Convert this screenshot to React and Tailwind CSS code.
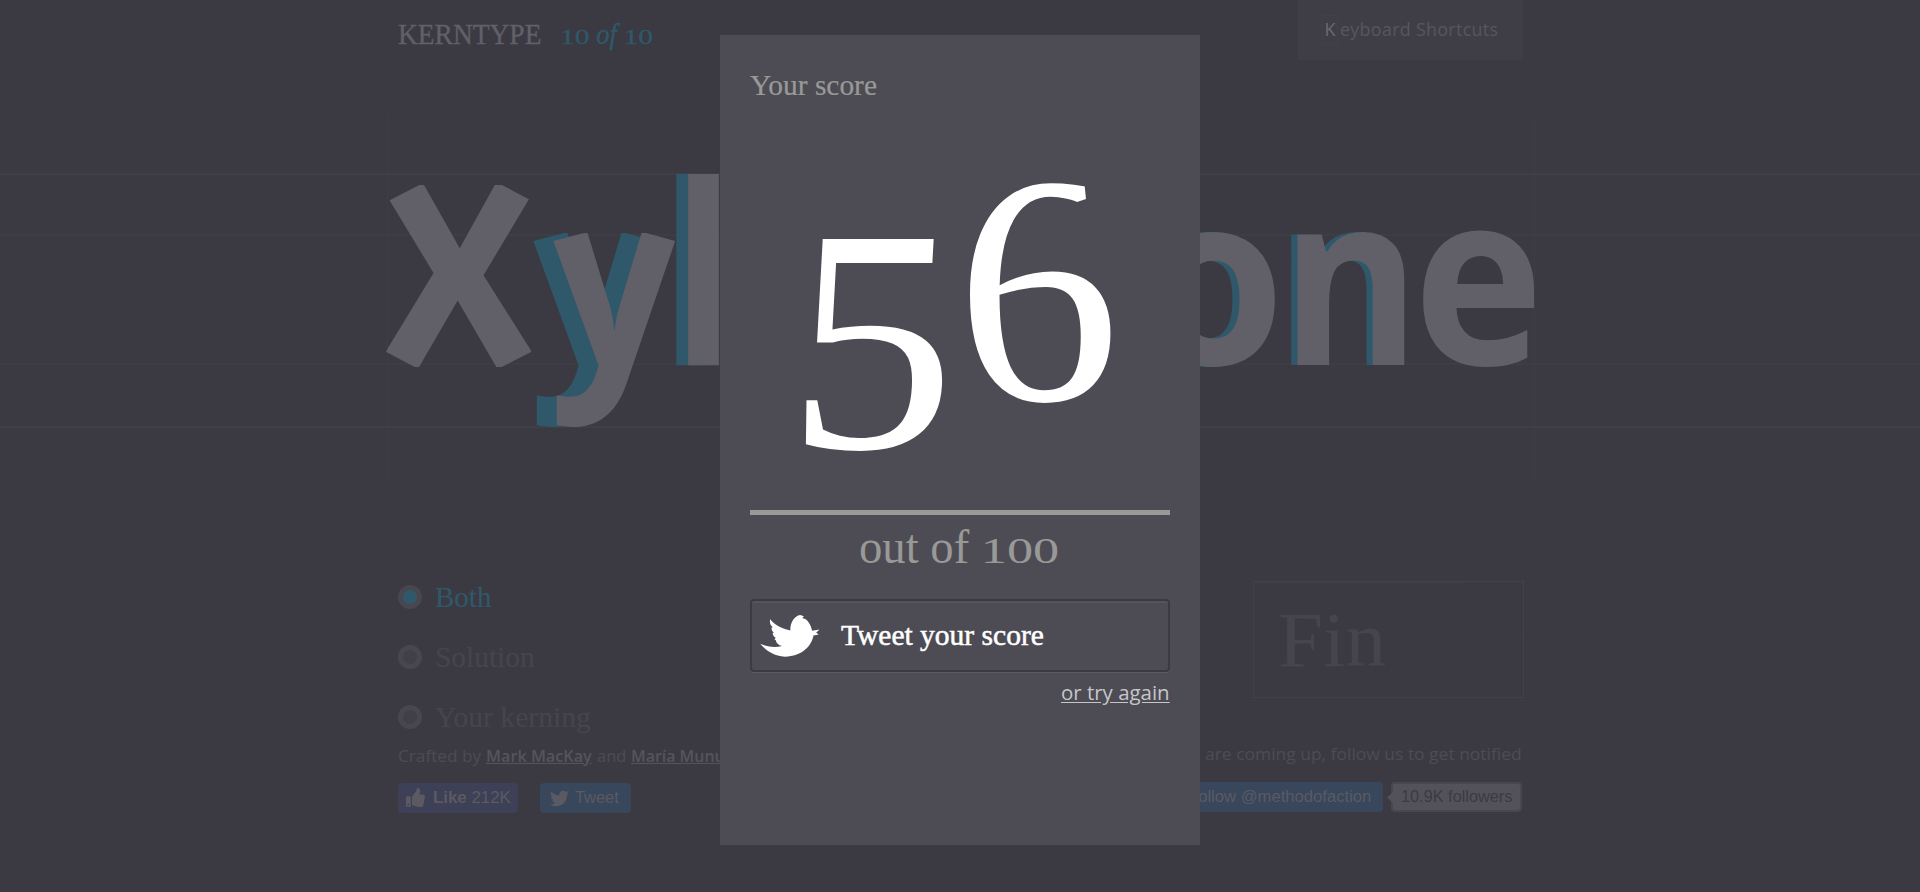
import { useLayoutEffect, useRef, useState } from "react";
import { FaThumbsUp, FaTwitter } from "react-icons/fa";

const SERIF = "font-['Liberation_Serif',serif]";
const SANS = "font-['Open_Sans',sans-serif]";
const ARIAL = "font-['Liberation_Sans',sans-serif]";

/* A line of text stretched to a given width. */
function FitText({ width, className = "", children }) {
  const ref = useRef(null);
  const [scale, setScale] = useState(1);
  useLayoutEffect(() => {
    setScale(width / ref.current.offsetWidth);
  }, [width]);
  return (
    <span className={`block ${className}`} style={{ width }}>
      <span
        ref={ref}
        className="inline-block origin-left whitespace-nowrap"
        style={{ transform: `scaleX(${scale})` }}
      >
        {children}
      </span>
    </span>
  );
}

/* Old-style numerals: digits squashed to the x-height, standing on the baseline. */
function OldStyle({ children }) {
  return (
    <span className="inline-block origin-[0_83.75%] scale-y-[0.65] text-[1.12em] leading-none">
      {children}
    </span>
  );
}

/* A single letter whose ink fills the box x, y, w, h. */
function Glyph({ char, font, weight = 400, x, y, w, h, ...rest }) {
  const ctx = document.createElement("canvas").getContext("2d");
  ctx.font = `${weight} 200px "${font}"`;
  const m = ctx.measureText(char);
  const sx = w / (m.actualBoundingBoxLeft + m.actualBoundingBoxRight);
  const sy = h / (m.actualBoundingBoxAscent + m.actualBoundingBoxDescent);
  const tx = x + m.actualBoundingBoxLeft * sx;
  const ty = y + m.actualBoundingBoxAscent * sy;
  return (
    <text
      fontFamily={font}
      fontWeight={weight}
      fontSize="200"
      transform={`translate(${tx} ${ty}) scale(${sx} ${sy})`}
      {...rest}
    >
      {char}
    </text>
  );
}

/* `cut` names the clip that slants the ends of a letter's strokes. */
const letters = [
  { char: "X", weight: 700, x: 371, y: 61, w: 177, h: 200, shift: 0, cut: "url(#cut-x)" },
  { char: "y", weight: 700, x: 549, y: 115, w: 130.5, h: 197, shift: -20, cut: "url(#cut-y)" },
  { char: "l", weight: 700, x: 687.5, y: 59, w: 32, h: 190.5, shift: -11.7 },
  { char: "o", weight: 700, x: 1151, y: 117, w: 124, h: 135.5, shift: -7 },
  { char: "n", weight: 700, x: 1297, y: 117, w: 108, h: 132.5, shift: -6.3 },
  { char: "e", weight: 700, x: 1422, y: 117, w: 112.5, h: 135.5, shift: 0 },
];

function KerningCanvas() {
  return (
    <svg className="block h-[365px] w-[1920px]" viewBox="0 0 1920 365">
      <clipPath id="cut-x">
        <path d="M389.7 85.3L419.3 70H502L530.7 85.3L531 237L501.7 252H414.7L386.3 237Z" />
      </clipPath>
      <clipPath id="cut-y">
        <path d="M540 129.4L584 118H646L690 130V330H540Z" />
      </clipPath>
      <g fill="#403f48">
        <rect x="0" y="58" width="1920" height="2" />
        <rect x="0" y="119" width="1920" height="2" opacity="0.6" />
        <rect x="0" y="248" width="1920" height="2" opacity="0.6" />
        <rect x="0" y="311" width="1920" height="2" />
        <rect x="387" y="0" width="1" height="365" opacity="0.8" />
        <rect x="1534" y="0" width="1" height="365" opacity="0.5" />
      </g>
      {letters.map(({ shift, cut, ...l }) => (
        <g key={l.char}>
          {shift !== 0 && (
            <g transform={`translate(${shift} 0)`}>
              <g clipPath={cut}>
                <Glyph {...l} font="Open Sans" fill="#2f596a" />
              </g>
            </g>
          )}
          <g clipPath={cut}>
            <Glyph {...l} font="Open Sans" fill="#616068" />
          </g>
        </g>
      ))}
    </svg>
  );
}

function Radio({ label, width, active }) {
  return (
    <div className="flex h-[60px] items-center gap-[13px]">
      <span
        className={`size-6 rounded-full border-[5px] border-[#484750] ${
          active ? "bg-[#2f596a]" : "bg-[#414049]"
        }`}
      />
      <FitText
        width={width}
        className={`${SERIF} text-[28.5px] leading-[61px] ${active ? "text-[#2f596a]" : "text-[#46454e]"}`}
      >
        {label}
      </FitText>
    </div>
  );
}

function Page() {
  return (
    <div className="flex h-full w-full flex-col">
      <header className="mx-auto flex h-[115px] w-[1126px] items-start justify-between">
        <div className={`flex gap-[19px] pl-px pt-[9px] text-[29px] leading-[50px] ${SERIF}`}>
          <FitText width={143} className="text-[#616068] [-webkit-text-stroke:0.3px_#616068]">KERNTYPE</FitText>
          <FitText width={93} className="text-[#2f596a] [-webkit-text-stroke:0.4px_#2f596a]">
            <OldStyle>10</OldStyle> <i>of</i> <OldStyle>10</OldStyle>
          </FitText>
        </div>
        <div className={`flex h-[60px] w-[225px] items-center bg-[#3f3e47] pb-px pl-[24px] text-[18px] leading-[30px] ${SANS}`}>
          <span className="flex h-[30px] w-4 justify-center border border-[#42414a] font-medium leading-[26px] text-[#6b6a71]">K</span>
          <FitText width={158} className="-mt-px ml-[2px] font-medium tracking-[0.3px] text-[#57565e]">eyboard Shortcuts</FitText>
        </div>
      </header>

      <KerningCanvas />

      <div className="mx-auto flex h-[267px] w-[1126px] items-start justify-between pt-[87px]">
        <div className="pl-[1px]">
          <Radio label="Both" width={56} active />
          <Radio label="Solution" width={100} />
          <Radio label="Your kerning" width={156} />
        </div>
        <div className="-mr-px mt-[14px] h-[117px] w-[271px]">
          <div className="relative flex h-full items-center border border-dotted border-[#4a4952] pl-[24px]">
            <svg className="absolute inset-0 size-full" viewBox="0 0 269 115" fill="none" stroke="#3c3c49">
              <path d="M2 1H214L268 57L214 114H2Z" />
            </svg>
            <FitText width={108} className={`relative ${SERIF} text-[78px] leading-[115px] text-[#46454e]`}>Fin</FitText>
          </div>
        </div>
      </div>

      <footer className="mx-auto flex w-[1126px] justify-between">
        <div className="pl-[1px]">
          <div className={`${SANS} flex h-[36px] gap-[5px] text-[17px] leading-[17px] text-[#4d4c55]`}>
            <FitText width={83} className="font-medium">Crafted by</FitText>
            <FitText width={106} className="font-semibold text-[#55545c]"><u>Mark MacKay</u></FitText>
            <FitText width={29} className="font-medium">and</FitText>
            <FitText width={119} className="font-semibold text-[#55545c]"><u>María Munuera</u></FitText>
          </div>
          <div className={`flex gap-[22px] ${ARIAL} text-[16px] text-[#5b5a62]`}>
            <div className="flex h-[30px] w-[120px] items-center rounded-[4px] bg-[#3d4056] pl-2">
              <FaThumbsUp className="mr-2 size-[19px] -translate-y-px" />
              <FitText width={78} className="leading-[26px]">
                <b>Like</b> 212K
              </FitText>
            </div>
            <div className="flex h-[30px] w-[91px] items-center rounded-[4px] bg-[#38475c] pl-[10px]">
              <FaTwitter className="mr-[6px] size-[19px]" />
              <FitText width={44} className="leading-[30px]">Tweet</FitText>
            </div>
          </div>
        </div>
        <div className="flex flex-col items-end pr-[1px]">
          <FitText width={317} className={`${SANS} h-[35px] text-[17px] font-medium leading-[13px] text-[#4d4c55]`}>
            are coming up, follow us to get notified
          </FitText>
          <div className={`flex gap-2 ${ARIAL} text-[16px]`}>
            <div className="flex h-[30px] w-[222px] items-center justify-end rounded-[4px] bg-[#38475c] pr-3 text-[#5b5a62]">
              <FitText width={183} className="leading-[32px]">Follow @methodofaction</FitText>
            </div>
            <div className="relative flex h-[30px] w-[131px] items-center rounded-[4px] border-2 border-[#484750] bg-[#53525b] pl-2 text-[#3b3a43]">
              <svg className="absolute -left-[6px] top-[8px] h-[11px] w-[6px]" viewBox="0 0 6 11" fill="#53525b">
                <path d="M6 0V11L0 5.5Z" />
              </svg>
              <FitText width={111} className="leading-[30px]">10.9K followers</FitText>
            </div>
          </div>
        </div>
      </footer>
    </div>
  );
}

function ScoreDialog() {
  return (
    <div className="absolute left-[720px] top-[35px] flex h-[810px] w-[480px] flex-col bg-[#4d4c55] px-[30px]">
      <FitText width={127} className={`${SERIF} mt-[25px] text-[28.5px] leading-[51px] text-[#999997] [-webkit-text-stroke:0.2px_#999997]`}>
        Your score
      </FitText>
      <svg className="-mt-px block h-[400px] w-[420px] overflow-visible" viewBox="750 110 420 400" fill="#ffffff">
        <clipPath id="cut-6">
          <path d="M950 170H1083L1086 199L1077 202L1060 220V235H1130V420H950Z" />
        </clipPath>
        <g transform="matrix(1 0 -0.055 1 23 0)">
          <Glyph char="5" font="Liberation Serif" x={804.5} y={239} w={137} h={212} />
        </g>
        <g clipPath="url(#cut-6)">
          <Glyph char="6" font="Liberation Serif" x={969} y={184} w={143} h={219} />
        </g>
      </svg>
      <div className="h-[5px] shrink-0 bg-[#999997]" />
      <FitText width={200} className={`${SERIF} ml-[109px] h-[84px] text-[49px] leading-[64px] text-[#999997]`}>
        out of <OldStyle>100</OldStyle>
      </FitText>
      <button className="flex h-[73px] items-center rounded-[4px] border-2 border-[#3b3a43] pl-2 shadow-[inset_0_2px_0_#55545e,0_1px_0_#5b5a64]">
        <svg className="h-[42px] w-[60px]" viewBox="120 405 180 127" fill="#ffffff">
          <path d="M120 492C140 502 165 504 186 499C175 496 168 489 167 481L163 478L167 474C160 470 157 464 158 459L162 458C155 453 153 447 155 443L158 442C150 436 148 427 150 418C165 438 190 447 211 452C210 430 222 408 241 405L252 409L247 414L256 417C268 424 274 440 277 453L299 449L289 459L297 464L281 467C275 500 245 530 195 531C160 530 135 510 120 492Z" />
        </svg>
        <FitText width={203} className={`${SERIF} ml-[21px] text-left text-[28.5px] leading-[51px] text-white [-webkit-text-stroke:0.5px_#fff]`}>
          Tweet your score
        </FitText>
      </button>
      <FitText width={109} className={`${SANS} ml-auto mt-[5px] text-[19.5px] leading-[32px] text-[#c6c6c8]`}>
        <u className="underline-offset-2">or try again</u>
      </FitText>
    </div>
  );
}

export default function App() {
  return (
    <div className="relative h-[892px] w-[1920px] overflow-hidden bg-[#3b3a43]">
      <Page />
      <ScoreDialog />
    </div>
  );
}
